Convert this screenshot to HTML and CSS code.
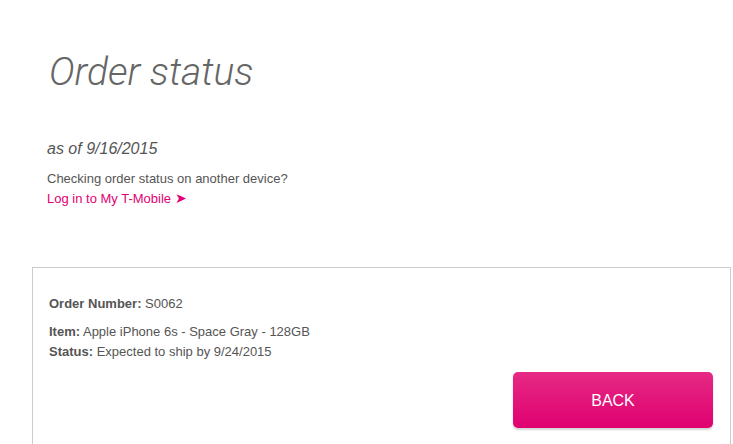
FILE: index.html
```html
<!DOCTYPE html>
<html>
<head>
<meta charset="utf-8">
<link rel="stylesheet" href="styles.css">
</head>
<body>
<div class="page">
  <div class="intro">
    <h1 class="title">Order status</h1>
    <p class="asof">as of 9/16/2015</p>
    <p class="check">Checking order status on another device?</p>
    <a class="login" href="#">Log in to My T-Mobile <span class="arrow">&#10148;</span></a>
  </div>
  <div class="card">
    <p class="line first"><b>Order Number:</b> S0062</p>
    <p class="line gap"><b>Item:</b> Apple iPhone 6s - Space Gray - 128GB</p>
    <p class="line"><b>Status:</b> Expected to ship by 9/24/2015</p>
    <div class="actions">
      <button class="back">BACK</button>
    </div>
  </div>
</div>
</body>
</html>
```
FILE: styles.css
```css
html, body {
  margin: 0;
  padding: 0;
  background: #fff;
  font-family: "Liberation Sans", Arial, sans-serif;
  color: #555;
}
.page {
  padding-top: 50px;
}
.intro {
  padding-left: 47px;
  height: 217px;
}
.title {
  margin: 0 0 0 2px;
  font-family: Roboto, "Liberation Sans", sans-serif;
  font-weight: 300;
  font-style: italic;
  font-size: 39px;
  line-height: 44px;
  color: #666;
}
.asof {
  margin: 45px 0 0;
  font-style: italic;
  font-size: 16px;
  line-height: 20px;
  color: #555;
}
.check {
  margin: 11px 0 0;
  font-size: 13px;
  line-height: 18px;
  color: #555;
}
.login {
  display: inline-block;
  margin-top: 2px;
  font-size: 13px;
  line-height: 18px;
  color: #e20074;
  text-decoration: none;
}
.arrow {
  font-size: 14px;
  line-height: 14px;
}
.card {
  margin-left: 32px;
  border: 1px solid #ccc;
  border-bottom: none;
  padding: 26px 17px 30px 16px;
  box-sizing: border-box;
  width: 699px;
}
.line {
  margin: 0;
  font-size: 13px;
  line-height: 20px;
  color: #555;
}
.gap {
  margin-top: 8px;
}
.actions {
  display: flex;
  justify-content: flex-end;
  margin-top: 10px;
}
.back {
  width: 200px;
  height: 56px;
  padding-top: 2px;
  border: none;
  border-radius: 5px;
  background: linear-gradient(#e62a84, #df0070);
  box-shadow: 0 2px 2px rgba(0,0,0,0.18);
  color: #fff;
  font-family: "Liberation Sans", Arial, sans-serif;
  font-size: 16px;
}
```
